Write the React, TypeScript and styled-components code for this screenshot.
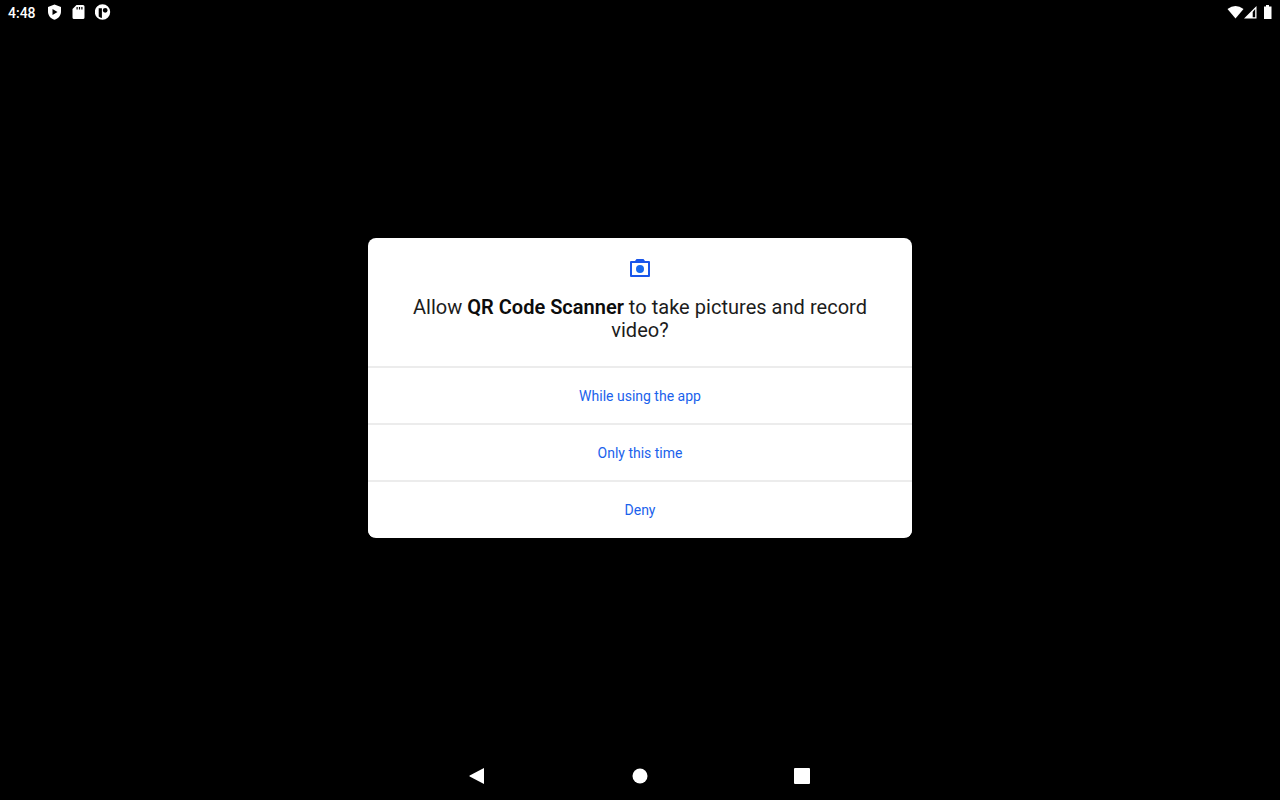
import React from "react";
import styled, { createGlobalStyle } from "styled-components";

const GlobalStyle = createGlobalStyle`
  * { box-sizing: border-box; }
  body { margin: 0; background: #000; font-family: Roboto, sans-serif; }
`;

const Screen = styled.div`
  display: flex;
  flex-direction: column;
  width: 100%;
  height: 100vh;
  overflow: hidden;
  background: #000;
`;

const StatusBar = styled.header`
  display: flex;
  justify-content: space-between;
  height: 24px;
  padding: 0 7px 0 8px;
  color: #fff;
`;

const StatusGroup = styled.div<{ $gap: number }>`
  display: flex;
  align-items: center;
  gap: ${(p) => p.$gap}px;
  svg { display: block; }
`;

const Clock = styled.span`
  width: 31px;
  font-size: 14px;
  font-weight: 500;
  line-height: 24px;
  padding-top: 1px;
`;

const Stage = styled.main`
  flex: 1;
  display: flex;
  align-items: center;
  justify-content: center;
`;

const Dialog = styled.section`
  display: flex;
  flex-direction: column;
  width: 544px;
  height: 300.5px;
  margin-bottom: 0.5px;
  border-radius: 8px;
  background: #fff;
  overflow: hidden;
`;

const DialogHeader = styled.div`
  display: flex;
  flex-direction: column;
  align-items: center;
  height: 128.5px;
  padding: 18.5px 24px 0;
  svg { display: block; }
`;

const Title = styled.h1`
  margin: 16px 0 0;
  width: 496px;
  text-align: center;
  font-size: 20px;
  font-weight: 400;
  line-height: 23.4px;
  letter-spacing: 0.03px;
  color: #1c1c1c;
`;

const AppName = styled.strong`
  font-weight: 600;
  letter-spacing: 0;
  color: #0c0c0c;
`;

const Choice = styled.button`
  height: 57px;
  padding: 0;
  border: 0;
  border-top: 2px solid #ececec;
  background: #fff;
  color: #1a62ec;
  font: 400 14px/20px Roboto, sans-serif;
  letter-spacing: 0;
`;

const NavBar = styled.nav`
  display: flex;
  justify-content: center;
  align-items: center;
  gap: 138px;
  height: 48px;
  svg { display: block; }
`;

const choices = ["While using the app", "Only this time", "Deny"];

export default function App() {
  return (
    <Screen>
      <GlobalStyle />
      <StatusBar>
        <StatusGroup $gap={8}>
          <Clock>4:48</Clock>
          <svg width="16" height="24" viewBox="0 0 16 24" fill="#fff">
            <path fillRule="evenodd" d="M7.500 4.500 14 7v4.500c0 4-2.600 7-6.500 8.200C3.600 18.500 1 15.500 1 11.500V7ZM5.500 9v6l5-3Z" />
          </svg>
          <svg width="16" height="24" viewBox="0 0 16 24" fill="#fff">
            <path fillRule="evenodd" d="M5.500 5H12q1.500 0 1.500 1.500v11Q13.500 19 12 19H3q-1.500 0-1.500-1.500V9ZM5.500 7v2.500h1.200V7Zm2.400 0v2.500h1.200V7Zm2.400 0v2.500h1.200V7Z" />
          </svg>
          <svg width="16" height="24" viewBox="0 0 16 24" fill="#fff">
            <path fillRule="evenodd" d="M7.500 4.300a7.700 7.700 0 1 1 0 15.400 7.700 7.700 0 0 1 0-15.400ZM3.700 8.200v8.200q1.300 1.300 3.200 1.600V8.200ZM10.200 7.900a2.400 2.400 0 1 0 0 4.800 2.400 2.400 0 0 0 0-4.800Z" />
          </svg>
        </StatusGroup>
        <StatusGroup $gap={0}>
          <svg width="46" height="24" viewBox="0 0 46 24" fill="#fff">
            <path d="M8.500 18.500.500 9Q8.500 2.800 16.500 9Z" />
            <path fillRule="evenodd" d="M17 18.500 29.500 6v12.500ZM25.700 12v5.200h2.500V9Z" />
            <path d="M37 6.500h2V5h3v1.500h2.500V19H37Z" />
          </svg>
        </StatusGroup>
      </StatusBar>
      <Stage>
        <Dialog role="dialog" aria-label="Camera permission">
          <DialogHeader>
            <svg width="24" height="24" viewBox="0 0 24 24">
              <path
                fill="#1a56ea"
                fillRule="evenodd"
                d="M8.500 3h7l1.500 2h4q1 0 1 1v14q0 1-1 1H3q-1 0-1-1V6q0-1 1-1h4ZM4 7v12h16V7Z"
              />
              <circle cx="12" cy="13" r="4" fill="#1769ee" />
            </svg>
            <Title>
              Allow <AppName>QR Code Scanner</AppName> to take pictures and record video?
            </Title>
          </DialogHeader>
          {choices.map((label) => (
            <Choice key={label}>{label}</Choice>
          ))}
        </Dialog>
      </Stage>
      <NavBar>
        <svg width="24" height="24" viewBox="0 0 24 24" fill="#fff">
          <path d="M18 4v16L3.700 12.500q-.8-.500 0-1Z" />
        </svg>
        <svg width="24" height="24" viewBox="0 0 24 24" fill="#fff">
          <circle cx="12" cy="12" r="7.500" />
        </svg>
        <svg width="24" height="24" viewBox="0 0 24 24" fill="#fff">
          <rect x="4" y="4" width="16" height="16" rx="1" />
        </svg>
      </NavBar>
    </Screen>
  );
}
